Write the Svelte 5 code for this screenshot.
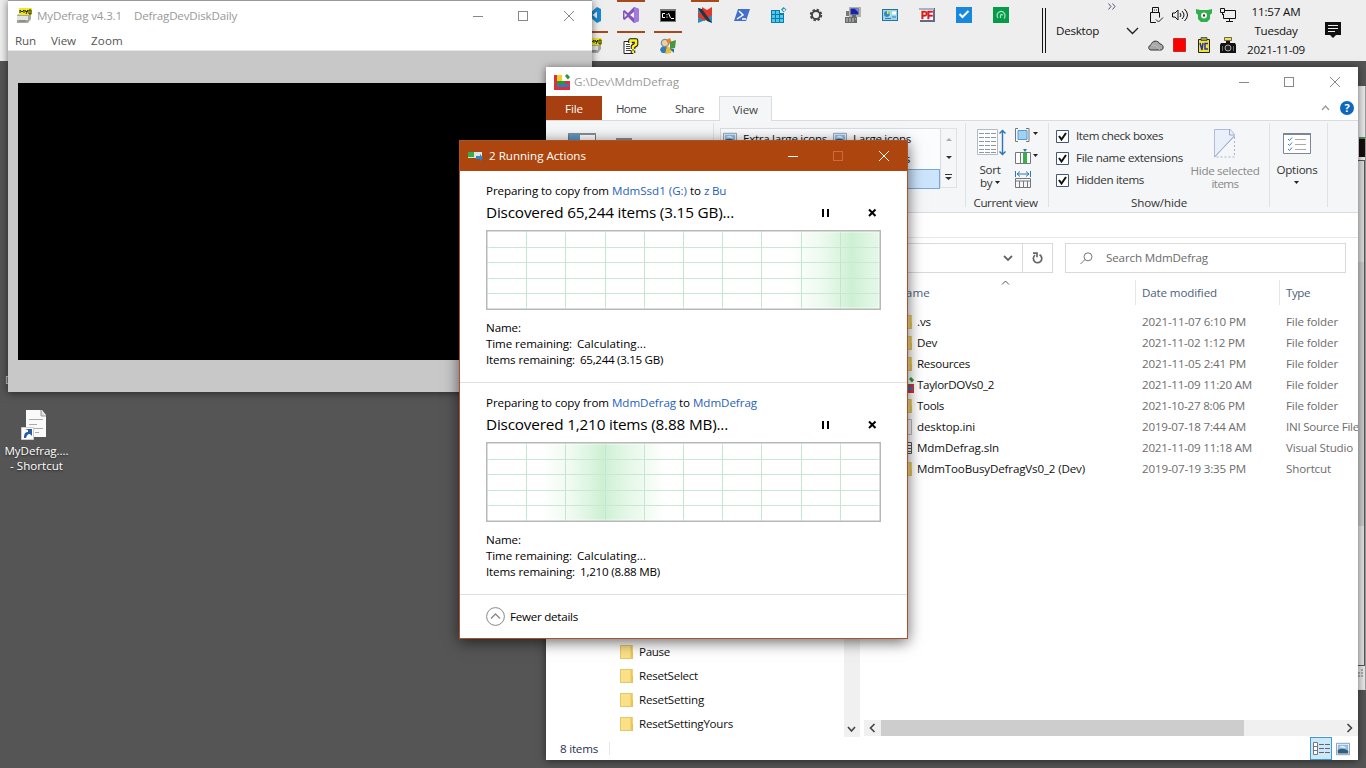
<script>
  // Spreads or tightens the letters of a label so that it fills the given width.
  function fit(node, width) {
    if (!width) return;
    const range = document.createRange();
    range.selectNodeContents(node);
    const natural = range.getBoundingClientRect().width;
    node.style.letterSpacing = `${(width - natural) / node.textContent.length}px`;
  }

  const launchers = ['code', 'vs', 'cmd', 'nt', 'ps', 'reg', 'gear', 'pc', 'panel', 'pf', 'check', 'cam'];
  const active = ['vs', 'nt'];
  const second = ['myd', 'help', 'users'];
  const tray = ['usb', 'sound', 'bear', 'net', 'cloud', 'red', 'vc', 'camera'];

  const jobs = [
    { from: 'MdmSsd1 (G:)', fw: 75, to: 'z Bu', tw: 22, title: 'Discovered 65,244 items (3.15 GB)...', w: 248, left: '65,244 (3.15 GB)', lw: 83, glow: 366, first: true },
    { from: 'MdmDefrag', fw: 64, to: 'MdmDefrag', tw: 64, title: 'Discovered 1,210 items (8.88 MB)...', w: 242, left: '1,210 (8.88 MB)', lw: 80, glow: 117 }
  ];
  const gridX = [40, 79, 119, 158, 197, 236, 275, 315, 354];
  const gridY = [17, 32, 48, 63];

  const files = [
    ['.vs', 14, '2021-11-07 6:10 PM', 104, 'File folder', 52, 'folder'],
    ['Dev', 20, '2021-11-02 1:12 PM', 103, 'File folder', 52, 'folder'],
    ['Resources', 53, '2021-11-05 2:41 PM', 104, 'File folder', 52, 'folder'],
    ['TaylorDOVs0_2', 77, '2021-11-09 11:20 AM', 110, 'File folder', 52, 'blocks'],
    ['Tools', 27, '2021-10-27 8:06 PM', 103, 'File folder', 52, 'folder'],
    ['desktop.ini', 58, '2019-07-18 7:44 AM', 104, 'INI Source File', 73, 'page'],
    ['MdmDefrag.sln', 82, '2021-11-09 11:18 AM', 110, 'Visual Studio', 67, 'sln'],
    ['MdmTooBusyDefragVs0_2 (Dev)', 168, '2019-07-19 3:35 PM', 104, 'Shortcut', 45, 'folder']
  ];
  const tree = [['Pause', 31], ['ResetSelect', 59], ['ResetSetting', 65], ['ResetSettingYours', 94]];
  const checks = [['Item check boxes', 87], ['File name extensions', 107], ['Hidden items', 68]];
</script>

{#snippet t(text, w, cls = '')}<span class="t {cls}" use:fit={w}>{text}</span>{/snippet}

{#snippet controls()}
  <svg class="ctl" width="102" height="12" viewBox="0 0 102 12" fill="none" stroke="currentColor">
    <path d="M0 5.500H10" /><rect class="mx" x="45.500" y=".5" width="9" height="9" /><path d="M91 0l10 10M101 0L91 10" />
  </svg>
{/snippet}

{#snippet icon(n)}
  <svg width="16" height="16" viewBox="0 0 16 16">
    {#if n === 'code'}
      <path d="M11 0l4 2v12l-4 2-7-6-3 2-1-1 3-3-3-3 1-1 3 2z" fill="#1689ce" /><path d="M11 4.500v7L6.500 8z" fill="#eee" />
    {:else if n === 'vs'}
      <path d="M11 0l5 2v12l-5 2-6-6-3.500 3L0 12V4l1.500-1L5 6z" fill="#8454ba" /><path d="M11.500 4.500v7L7 8zM1.500 5.500v5L4 8z" fill="#eee" /><path d="M11 0l5 2v12l-5 2z" fill="#a179df" />
    {:else if n === 'cmd'}
      <rect y="2" width="16" height="13" fill="#777" /><rect x="1" y="4" width="14" height="10" fill="#000" />
      <path d="M5 6.500H2.500v4H5M7 7v1.200M7 9.500v1.200M8.500 6l2 5M11 11.500h3" stroke="#fff" fill="none" />
    {:else if n === 'nt'}
      <path d="M1 1l5 2 4 5-4 5-5 2z" fill="#2a93c4" /><path d="M5 0l5 3 5-3v15l-4-2L5 6z" fill="#e2382c" /><path d="M1 10l5-4 5 5 4-3v8l-5-3-4 1-5 2z" fill="#278fbd" /><path d="M1 5l7 5v4l-7-4z" fill="#e2382c" /><path d="M1 1l4 1 8 11 2 3-5-2-7-9z" fill="#2b333e" />
    {:else if n === 'ps'}
      <path d="M4 2h12l-4 12H0z" fill="#406fcd" /><path d="M5 4l4 4-6 4M8 12h4" stroke="#fff" stroke-width="1.500" fill="none" />
    {:else if n === 'reg'}
      <path d="M0 3h9v3h4v10H0z" fill="#087eac" /><path d="M1 4h3v3H1zM5 4h3v3H5zM1 8h3v3H1zM5 8h3v3H5zM9 8h3v3H9zM1 12h3v3H1zM5 12h3v3H5zM9 12h3v3H9z" fill="#54c8ec" /><path d="M12.500 0l3 2.500-3 3-2.500-3z" fill="#3b91b6" /><path d="M12 2h2v2h-2z" fill="#c6eef8" />
    {:else if n === 'gear'}
      <circle cx="8" cy="8" r="5.300" fill="none" stroke="#444" stroke-width="1.800" stroke-dasharray="2.400 1.760" /><circle cx="8" cy="8" r="4" fill="none" stroke="#444" stroke-width="1.800" />
    {:else if n === 'pc'}
      <path d="M4 0h12v10H4z" fill="#b2b2a6" /><path d="M5.500 1.500h8v6h-8z" fill="#1724a5" /><path d="M9.500 1.500h4v4z" fill="#7985dd" /><path d="M1 4h3v5H1z" fill="#777b78" /><path d="M7 8h4v3H7zM0 10h12v6H0z" fill="#666a68" /><path d="M1 12h10M1 14h9" stroke="#ccc" stroke-dasharray="2 1" />
    {:else if n === 'panel'}
      <path d="M0 2h16v12H0z" fill="#2d6f9f" /><path d="M1 3h14v10H1z" fill="#9ad7ec" /><circle cx="5.500" cy="7" r="3" fill="#fff" /><path d="M5 4a3 3 0 103 3H5z" fill="#3588ba" /><path d="M5.500 4v3h3a3 3 0 00-3-3" fill="#a4c64b" /><path d="M10 4.500h4v3h-4z" fill="#fff" /><path d="M10 10h4M3 11.500h6" stroke="#387eaa" />
    {:else if n === 'pf'}
      <path d="M0 1h16v14H1V3H0z" fill="#646a80" /><path d="M1 3h13v10H1z" fill="#fff" /><path d="M0 1h15v2H0z" fill="#a4b2ca" /><text x="2" y="12.300" font-family="Liberation Sans" font-weight="900" font-size="10" stroke="#dc1515" stroke-width=".5" textLength="12" fill="#dc1515">PF</text>
    {:else if n === 'check'}
      <path d="M0 0h16v16H0z" fill="#1788dc" /><path d="M3.500 7l3 3 6-6" stroke="#fff" stroke-width="2" fill="none" />
    {:else if n === 'cam'}
      <path d="M0 0h16v16H0z" fill="#069b4b" /><path d="M5 11a4 4 0 117-2c0 1-.5 2-1 2.500M7.500 11V8.500c0-1.500 2-1.500 2 0" stroke="#a6dcbc" stroke-width="1.300" fill="none" />
    {:else if n === 'myd'}
      <path d="M1 7l4-2h10v6l-3 4H1z" fill="#a6a6a6" /><path d="M1 8h11v4H1z" fill="#e3e3df" /><path d="M3 0h13v7H3z" fill="#edea21" /><path d="M4 5V2l2 2 2-2v3M9 2l1 2 2-2-2 4M13 2v4h2V2z" stroke="#252510" fill="none" /><path d="M3 13h7" stroke="#797979" />
    {:else if n === 'help'}
      <path d="M1 3.500h9v12H1z" fill="#fff" stroke="#222" /><path d="M3 6.500h4M3 8.500h4M3 10.500h4M3 12.500h5" stroke="#444" /><path d="M7.500 5V2.500h5.500v4l-3 2V11M10 12.500v2.500" stroke="#111" stroke-width="4.600" fill="none" stroke-linejoin="round" /><path d="M7.500 5V2.500h5.500v4l-3 2V11M10 12.500v2.500" stroke="#fcf219" stroke-width="2.600" fill="none" stroke-linejoin="round" />
    {:else if n === 'users'}
      <path d="M0 12c1-5 6-5 8-2l-2 5H2z" fill="#317bb7" /><circle cx="5" cy="5" r="4.300" fill="#7b8f9c" /><circle cx="5" cy="5" r="3" fill="#f2cfa0" /><path d="M6 2l4-2 2 5-4 1z" fill="#e28332" /><path d="M7 8l5 3-1 4-6 1z" fill="#e8bd39" /><path d="M10 4l6-2-1 8-5 1z" fill="#4b9441" /><path d="M10 11h4v4z" fill="#256cac" />
    {:else if n === 'usb'}
      <path d="M4.500 5.500V.5h6v5M2.500 5.500h9v10h-9z" fill="none" stroke="#111" /><path d="M6 3h1M8 3h1" fill="none" stroke="#222" /><path d="M7 10.500h8.500V16H8z" fill="#eee" /><path d="M8 12.500l2.500 2.500 4.500-4.500" fill="none" stroke="#222" />
    {:else if n === 'sound'}
      <path d="M.5 6v4H3l3 3V3L3 6z" fill="none" stroke="#111" /><path d="M8 6q2 2 0 4M10 4q4 4 0 8M12.500 2q6 6 0 12" fill="none" stroke="#111" />
    {:else if n === 'bear'}
      <path d="M0 2l4 1h8l4-1v4l-2 2v4l-3 3H5l-3-3V8L0 6z" fill="#32ad4d" /><circle cx="8" cy="8.500" r="3" fill="#eee" /><path d="M7 7.500h2v2H7z" fill="#333" />
    {:else if n === 'net'}
      <path d="M5 3.500h10.500v8H3.500V7M9.500 12v3M6 14.500h7M.5 1.500h4v4h-4zM2.500 6v2" fill="none" stroke="#111" />
    {:else if n === 'cloud'}
      <path d="M3 13C0 13 0 8.500 3 8c1-5 7-5 9-1 4 0 4 6 1 6z" fill="#a8a8a8" stroke="#333" /><path d="M3 8q5-1 9 5" stroke="#bebebe" fill="none" />
    {:else if n === 'red'}
      <path d="M1.500 1.500h12v13h-12z" fill="#f00" stroke="#b31a12" stroke-width=".8" />
    {:else if n === 'vc'}
      <path d="M2.500 2.500h11v13h-11z" fill="#f1e534" stroke="#222" /><path d="M5 .5h6v3H5z" fill="#a0a04d" stroke="#222" stroke-width=".6" /><path d="M4 6l2 7 1-7M12 6.500H9V12h3" fill="none" stroke="#2935a1" stroke-width="1.500" />
    {:else if n === 'camera'}
      <path d="M4.500.5h7v3h-7z" fill="#eee34c" stroke="#333" stroke-width=".7" /><path d="M6 4h4v2h5l1 2v8H0V8l1-2h5z" fill="#111" /><circle cx="8" cy="11" r="3" fill="#222" stroke="#aaa" /><path d="M2.500 9v5M13.500 9v5" stroke="#666" />
    {:else if n === 'blocks'}
      <path d="M0 1h8v6h8v9H0z" fill="#d9313a" /><path d="M3 1h5v6H3z" fill="#f2cf22" /><path d="M3 7h8v3H3z" fill="#239b35" /><path d="M3 10h12v3H3z" fill="#3d72bd" /><path d="M11 2l2-2 3 3-2 2.500z" fill="#239b35" />
    {:else if n === 'folder'}
      <path d="M1 1h13v14H1z" fill="#f5d36e" /><path d="M2 2h9v12H2z" fill="#fbe08a" /><path d="M12 8h2v7h-2z" fill="#e9c251" /><path d="M1.500 1.500h11v13h-11z" fill="none" stroke="#e7c75f" />
    {:else if n === 'page'}
      <path d="M2.500.5h11v15h-11z" fill="#fafafa" stroke="#bbb" />
    {:else if n === 'sln'}
      <path d="M2.500 2.500h11v11h-11z" fill="#fff" stroke="#555" /><path d="M9 5.500h4M9 8.500h4M9 11.500h4" stroke="#555" />
    {:else if n === 'pic'}
      <path d="M.5 1.500h15v13H.5z" fill="#fff" stroke="#7d91aa" /><path d="M2 3h12v10H2z" fill="#8dbbe8" /><path d="M2 9q6-3 12 1v3H2z" fill="#355e79" /><path d="M3 6q5-4 9 1z" fill="#dceefa" />
    {/if}
  </svg>
{/snippet}

<main>
  <div class="back">
    <i class="blk"></i><i class="line"></i>
    <svg width="8" height="14"><path d="M5 4h3M2 7h6M2 10h6" stroke="#aaa" stroke-width="2" stroke-dasharray="2 1" /></svg>
  </div>

  <header class="taskbar">
    <div class="launch">
      <div class="row">
        {#each launchers as n}<div class="slot" class:on={active.includes(n)}>{@render icon(n)}</div>{/each}
      </div>
      <div class="row low">
        {#each second as n}<div class="slot on">{@render icon(n)}</div>{/each}
      </div>
    </div>
    <i class="bars"></i>
    <div class="deskbar">
      {@render t('Desktop', 43)}
      <svg class="more" width="8" height="7"><path d="M.5.500L3 3.500.5 6.500M4.500.500L7 3.500 4.500 6.500" fill="none" stroke="#555581" /></svg>
      <svg width="13" height="8"><path d="M1 1l5.500 5.500L12 1" fill="none" stroke="#222" stroke-width="1.400" /></svg>
    </div>
    <div class="tray">{#each tray as n}{@render icon(n)}{/each}</div>
    <div class="clock">{@render t('11:57 AM', 49)}{@render t('Tuesday', 43)}{@render t('2021-11-09', 58)}</div>
    <svg class="note" width="16" height="16"><path d="M0 0h16v13h-5l-3 3-3-3H0z" fill="#111" /><path d="M3 3.500h10M3 6.500h10M3 9.500h7" stroke="#eee" /></svg>
  </header>

  <div class="hiddenlabel">D</div>
  <div class="shortcut">
    <svg width="26" height="30" viewBox="0 0 26 30"><path d="M5 0h16l4 5v22H5z" fill="#fafafa" /><path d="M20 0v6h5" fill="#ddd" stroke="#999" /><path d="M8 9.500h14M8 14.500h8M13 18.500h9M14 22.500h4" stroke="#aaa" /><path d="M.5 17.500h12v12H.5z" fill="#fff" stroke="#ccc" /><path d="M3 28c0-4 1-6 4-6v-2l-3-1h7v7l-2-2c-3 0-3 2-4 4z" fill="#285c9f" /></svg>
    {@render t('MyDefrag....', 64)}{@render t('- Shortcut', 53)}
  </div>

  <section class="win mydefrag">
    <div class="mtitle">{@render icon('myd')}{@render t('MyDefrag v4.3.1', 85, 'a')}{@render t('DefragDevDiskDaily', 103)}{@render controls()}</div>
    <nav>{@render t('Run', 21)}{@render t('View', 25)}{@render t('Zoom', 32)}</nav>
    <div class="mbody"><div class="black"></div></div>
  </section>

  <section class="win explorer">
    <div class="etitle">{@render icon('blocks')}{@render t('G:\\Dev\\MdmDefrag', 105)}{@render controls()}</div>
    <div class="tabs">
      <div class="tab file">{@render t('File', 18)}</div>
      <div class="tab home">{@render t('Home', 30)}</div>
      <div class="tab share">{@render t('Share', 29)}</div>
      <div class="tab view">{@render t('View', 25)}</div>
      <svg class="fold" width="9" height="6"><path d="M1 5l3.500-4L8 5" fill="none" stroke="#999" stroke-width="1.300" /></svg>
      <div class="q">?</div>
    </div>
    <div class="ribbon">
      <div class="panes">
        <svg width="28" height="28"><path d="M.5.500h27v27H.5z" fill="#fff" stroke="#777" /><path d="M0 0h28v2H0z" fill="#858e99" /><path d="M1 2h11v25H1z" fill="#4f9bd1" /></svg>
        <svg class="p2" width="16" height="16"><path d="M0 0h16v16H0z" fill="#8b8e94" /></svg>
      </div>
      <div class="layout">
        <div class="gal">
          <div class="grow">{@render icon('pic')}{@render t('Extra large icons', 84)}{@render icon('pic')}{@render t('Large icons', 58)}</div>
          <div class="grow">{@render icon('pic')}{@render t('Medium icons', 84)}{@render icon('pic')}{@render t('Small icons', 57)}</div>
          <div class="sel"></div>
        </div>
        <div class="spin">
          <svg width="6" height="3"><path d="M3 0l3 3H0z" fill="#aaa" /></svg>
          <svg width="6" height="3"><path d="M0 0h6L3 3z" fill="#333" /></svg>
          <svg width="7" height="6"><path d="M0 0h7v1H0zM0 3h7L3.500 6z" fill="#333" /></svg>
        </div>
      </div>
      <div class="group current">
        <div class="gbody">
          <div class="sort">
            <svg width="29" height="28"><path d="M.5.500h20v25H.5z" fill="#fff" stroke="#b4bac1" /><path d="M2 4.500h17M2 8.500h17M2 12.500h17M2 16.500h17M2 20.500h17M2 23.500h17" stroke="#8a9aa5" stroke-dasharray="5 1" /><path d="M25.500 2v23M22.500 4.500l3-3 3 3M22.500 22.500l3 3 3-3" fill="none" stroke="#2d76b5" stroke-width="1.400" /></svg>
            {@render t('Sort', 21)}
            <div class="by">{@render t('by', 12)}<svg width="5" height="3"><path d="M0 0h5L2.500 3z" fill="#222" /></svg></div>
          </div>
          <div class="mini">
            <svg width="23" height="14"><path d="M3 .5H.5v13H3M11 .5h3v13h-3" fill="none" stroke="#777" /><path d="M3 2.500h9v9H3z" fill="#a0d2f5" stroke="#599ace" /><path d="M18 4h5l-2.500 3z" fill="#222" /></svg>
            <svg width="23" height="15"><path d="M.5 3.500h15v11H.5zM5.500 3v11M11.500 3v11" fill="#fff" stroke="#777" /><path d="M8 4h4v10H8z" fill="#35b34b" /><path d="M8 0h4l-2 3z" fill="#2d76b5" /><path d="M18 5h5l-2.500 3z" fill="#222" /></svg>
            <svg width="23" height="17"><path d="M.5 0v6M15.500 0v6M2 3h12M5 .500L2 3l3 2.500M11 .500L14 3l-3 2.500" fill="none" stroke="#2d76b5" /><path d="M.5 7.500h15v9H.5zM0 10h16M4.500 10v6M8.500 10v6M12.500 10v6" fill="none" stroke="#777" /></svg>
          </div>
        </div>
        {@render t('Current view', 64, 'cap')}
      </div>
      <div class="group show">
        <div class="gbody">
          <div class="checks">
            {#each checks as [c, w]}
              <div class="ck"><svg width="13" height="13"><path d="M.5.500h12v12H.5z" fill="#fff" stroke="#445874" /><path d="M3 6l2.500 3.500L10 3" fill="none" stroke="#111" stroke-width="2" /></svg>{@render t(c, w)}</div>
            {/each}
          </div>
          <div class="hide">
            <svg width="22" height="29"><path d="M.5.500h16l4 5v1L.5 28z" fill="#eaf0fb" stroke="#b1bdd8" /><path d="M15.500 0v6h5M.5 28L20.500 7" fill="none" stroke="#9baacb" /><path d="M20.500 8v20H0" fill="none" stroke="#aab5cd" stroke-dasharray="2 2" /></svg>
            {@render t('Hide selected', 69)}{@render t('items', 27)}
          </div>
        </div>
        {@render t('Show/hide', 56, 'cap')}
      </div>
      <div class="group opts">
        <svg width="28" height="22"><path d="M.5.500h27v20H.5z" fill="#fff" stroke="#7b8796" /><path d="M0 1h28" stroke="#7b8796" stroke-width="2" /><path d="M5 6l1.500 1.500L9 4.500M5 11l1.500 1.500L9 9.500M5 16l1.500 1.500L9 14.500" fill="none" stroke="#3a80c2" /><path d="M12 6.500h11M12 11.500h11M12 16.500h11" stroke="#aaa" /></svg>
        {@render t('Options', 41)}
        <svg class="dn" width="5" height="3"><path d="M0 0h5L2.500 3z" fill="#222" /></svg>
      </div>
    </div>
    <div class="qat"></div>
    <div class="addr">
      <div class="path"><svg width="10" height="7"><path d="M1 1l4 4 4-4" fill="none" stroke="#666" stroke-width="1.800" /></svg></div>
      <div class="re"><svg width="11" height="12"><path d="M7.500 2.800A4.200 4.200 0 113 3.200M1 1.200h4v4" fill="none" stroke="#666" stroke-width="1.700" /></svg></div>
      <div class="search"><svg width="13" height="13"><circle cx="8" cy="4.800" r="4" fill="none" stroke="#777" /><path d="M5 7.500L.5 12" stroke="#777" /></svg>{@render t('Search MdmDefrag', 102)}</div>
    </div>
    <div class="content">
      <div class="tree">
        {#each tree as [n, w]}<div class="node">{@render icon('folder')}{@render t(n, w)}</div>{/each}
      </div>
      <div class="vs"><svg width="9" height="6"><path d="M1 1l3.500 4L8 1" fill="none" stroke="#444" stroke-width="1.600" /></svg></div>
      <div class="list">
        <div class="head">
          <div class="c1">{@render t('Name', 33)}<svg class="up" width="9" height="5"><path d="M1 4.500L4.500 1 8 4.500" fill="none" stroke="#555" /></svg></div>
          <div class="c2">{@render t('Date modified', 75)}</div>
          <div class="c3">{@render t('Type', 24)}</div>
        </div>
        {#each files as [n, nw, d, dw, k, kw, ic]}
          <div class="frow">
            <div class="c1">{@render icon(ic)}{@render t(n, nw)}</div>
            <div class="c2">{@render t(d, dw)}</div>
            <div class="c3">{@render t(k, kw)}</div>
          </div>
        {/each}
        <div class="hs">
          <svg width="17" height="16"><path d="M10.500 4L6.500 8l4 4" fill="none" stroke="#444" stroke-width="1.600" /></svg>
          <i></i>
          <svg class="r" width="17" height="16"><path d="M6.500 4l4 4-4 4" fill="none" stroke="#444" stroke-width="1.600" /></svg>
        </div>
      </div>
    </div>
    <div class="status">
      {@render t('8 items', 38)}<i></i>
      <div class="vbtn"><svg width="17" height="13"><path d="M.5.500h4v12h-4zM.5 4.500h4M.5 8.500h4" fill="#fff" stroke="#777" /><path d="M6 2.500h5M12 2.500h5M6 6.500h5M12 6.500h5M6 10.500h5M12 10.500h5" stroke="#666" /></svg></div>
      <div class="pbtn">{@render icon('pic')}</div>
    </div>
  </section>

  <section class="dialog">
    <div class="dtitle">
      <svg width="15" height="10"><path d="M0 1h14v6H0z" fill="#dde5e4" /><path d="M0 1h6v5H0z" fill="#2fb04b" /><path d="M8 5h4V3l3 4-3 3V8H8z" fill="#2b86d1" /></svg>
      {@render t('2 Running Actions', 97)}{@render controls()}
    </div>
    {#each jobs as j}
      <div class="job">
        <div class="from">{@render t('Preparing to copy from', 123)}{@render t(j.from, j.fw, 'link')}{@render t('to', 11)}{@render t(j.to, j.tw, 'link')}</div>
        <div class="disc">
          {@render t(j.title, j.w, 'big')}
          <svg width="56" height="9"><path d="M1 1h2v8H1zM6 1h2v8H6z" fill="#000" /><path d="M48 1.500l6.500 6.500M54.500 1.500L48 8" stroke="#000" stroke-width="2" /></svg>
        </div>
        <svg class="chart" width="395" height="80">
          <defs>
            <linearGradient id="glow{j.glow}" x1="0" x2="1"><stop offset="0" stop-color="#d3f2d7" stop-opacity="0" /><stop offset=".22" stop-color="#d9f4dd" stop-opacity=".4" /><stop offset=".5" stop-color="#cdf0d2" /><stop offset=".75" stop-color="#daf4de" stop-opacity=".6" /><stop offset="1" stop-color="#d3f2d7" stop-opacity="0" /></linearGradient>
          </defs>
          <rect width="395" height="80" fill="#fff" />
          <rect x={j.glow - 61} width="122" height="80" fill="url(#glow{j.glow})" />
          {#each gridX as x}<rect {x} y="0" width="1" height="80" fill="#c4e5d1" />{/each}
          {#each gridY as y}<rect x="0" {y} width="395" height="1" fill="#c8e7d6" />{/each}
          <rect x="2" y="2" width="391" height="76" fill="none" stroke="#fff" stroke-opacity=".7" />
          <rect x=".75" y=".75" width="393.500" height="78.500" fill="none" stroke="#b7b9b8" stroke-width="1.500" />
        </svg>
        <div class="info">
          <div>{@render t('Name:', 35)}</div>
          <div>{@render t('Time remaining:', 86)}{@render t('Calculating...', 69, 'v1')}</div>
          <div>{@render t('Items remaining:', 89)}{@render t(j.left, j.lw, 'v2')}</div>
        </div>
      </div>
    {/each}
    <div class="fewer">
      <svg width="19" height="19"><circle cx="9.500" cy="9.500" r="8.900" fill="#fff" stroke="#888" /><path d="M5 11.500L9.500 7l4.500 4.500" fill="none" stroke="#888" stroke-width="1.300" /></svg>
      {@render t('Fewer details', 68)}
    </div>
  </section>
</main>

<style>
  :global(body) { margin: 0; overflow: hidden; }
  main { position: relative; width: 1366px; height: 768px; overflow: hidden; background: #555; font: 11.600px/16px "Open Sans", "Noto Sans", sans-serif; color: #111; }
  * { box-sizing: border-box; }
  svg { display: block; flex: none; }
  .t { display: inline-block; white-space: pre; flex: none; }

  .taskbar { position: relative; height: 61px; background: #eee; display: flex; padding-left: 577px; }
  .launch { width: 465px; padding-left: 1px; }
  .row { display: flex; height: 31px; margin-left: 2px; }
  .slot { width: 28px; margin-right: 9px; padding: 7px 6px 0; height: 31px; }
  .slot.on { border-top: 2px solid #a6491c; padding-top: 5px; }
  .bars { width: 4px; margin: 8px 0; border: solid #111; border-width: 0 1px; }
  .deskbar { position: relative; width: 94px; display: flex; align-items: center; gap: 27px; padding-left: 10px; }
  .more { position: absolute; left: 62px; top: 3px; }
  .deskbar svg:last-child { margin-left: 0; }
  .tray { width: 90px; display: grid; grid-template-columns: repeat(4, 16px); grid-auto-rows: 16px; gap: 14px 8px; padding: 7px 0 0 8px; }
  .clock { width: 92px; display: flex; flex-direction: column; align-items: center; line-height: 19px; padding-top: 2px; }
  .note { margin: 22px 0 0 3px; }

  .back { position: absolute; left: 1356px; top: 86px; width: 10px; height: 604px; background: #e8e8e8; border-right: 1px solid #999; border-bottom: 1px solid #ddd; }
  .back .blk { display: block; margin: 51px 0 0 3px; width: 6px; height: 20px; background: #170d0d; border-top: 2px solid #4a8557; }
  .back .line { display: block; height: 506px; border: solid #555; border-width: 1px 1px 1px 0; margin-top: 3px; background: linear-gradient(#ddd 101px, #ccc 101px, #ccc 365px, #e2e2e2 365px); }

  .hiddenlabel { position: absolute; left: 5px; top: 372px; color: #ddd; }
  .shortcut { position: absolute; left: 0; top: 410px; width: 73px; display: flex; flex-direction: column; align-items: center; color: #fff; line-height: 15px; text-shadow: 0 1px 2px #222; }
  .shortcut svg { margin: 0 5px 3px 0; }

  .win { position: absolute; display: flex; flex-direction: column; background: #fff; box-shadow: 0 1px 8px #0008; }
  .mydefrag { left: 8px; top: 0; width: 584px; height: 392px; border-top: 1px solid #999; color: #999; }
  .mtitle { height: 30px; display: flex; align-items: center; padding: 0 17px 0 8px; }
  .a { margin: 0 12px 0 5px; }
  .ctl { margin-left: auto; margin-bottom: -2px; }
  .mtitle .ctl, .etitle .ctl { stroke: #888; }
  nav { display: flex; gap: 15px; padding: 2px 0 0 7px; height: 20px; color: #555; line-height: 18px; }
  .mbody { flex: 1; background: #c8c8c8; border-top: 1px solid #e5e5e5; padding: 32px 10px; }
  .black { height: 277px; background: #000; }

  .explorer { left: 546px; top: 67px; width: 812px; height: 693px; }
  .etitle { height: 29px; display: flex; align-items: center; padding: 0 17px 0 8px; gap: 4px; color: #999; }
  .tabs { height: 25px; display: flex; border-bottom: 1px solid #dadbdc; padding-right: 4px; color: #444; }
  .tab { display: flex; align-items: center; justify-content: center; height: 25px; padding-top: 1px; }
  .file { width: 56px; height: 24px; background: #a73f10; color: #fff; padding-top: 2px; }
  .home { width: 58px; }
  .share { width: 59px; }
  .view { width: 53px; background: #f5f6f7; border: 1px solid #dadbdc; border-bottom: 0; }
  .fold { margin: 9px 10px 0 auto; }
  .q { width: 14px; height: 14px; margin-top: 5px; border-radius: 50%; background: #0c68bd; color: #fff; text-align: center; font-weight: 700; line-height: 14px; font-size: 11px; }
  .ribbon { height: 92px; display: flex; background: #f5f6f7; border-bottom: 1px solid #dadbdc; }
  .panes { width: 168px; border-right: 1px solid #e1e2e3; margin: 2px 0 5px; display: flex; padding: 10px 0 0 22px; gap: 20px; }
  .p2 { margin-top: 5px; }
  .layout { width: 252px; border-right: 1px solid #e1e2e3; margin: 2px 0 5px; padding: 5px 0 0 6px; display: flex; }
  .gal { width: 221px; height: 60px; border: 1px solid #d8dbe0; background: #fbfcfd; }
  .grow { height: 20px; display: flex; align-items: center; gap: 6px; padding-left: 2px; }
  .grow svg { width: 14px; }
  .sel { height: 20px; background: #cce4fc; border: 1px solid #7ca6d3; margin-left: 110px; }
  .spin { width: 16px; height: 60px; border: 1px solid #dfe1e4; border-left: 0; display: flex; flex-direction: column; align-items: center; justify-content: space-between; padding: 9px 0 7px; }
  .group { display: flex; flex-direction: column; align-items: center; border-right: 1px solid #e1e2e3; margin: 2px 0 5px; color: #333; }
  .gbody { height: 72px; display: flex; width: 100%; flex: none; }
  .current { width: 83px; }
  .current .cap { margin-right: 3px; }
  .sort { width: 48px; padding: 6px 0 0; display: flex; flex-direction: column; align-items: center; line-height: 13px; }
  .sort > svg { margin: 0 -2px 6px 0; }
  .by { display: flex; align-items: center; gap: 3px; }
  .mini { padding: 5px 0 0 1px; display: flex; flex-direction: column; gap: 7px; }
  .show { width: 221px; }
  .checks { width: 134px; padding: 2px 0 0 7px; }
  .ck { height: 22px; display: flex; align-items: center; gap: 7px; }
  .hide { width: 84px; padding-top: 6px; display: flex; flex-direction: column; align-items: center; line-height: 13px; color: #888; }
  .hide svg { margin-bottom: 6px; }
  .opts { width: 58px; padding: 10px 3px 0 0; }
  .opts > svg { margin-bottom: 7px; }
  .opts .dn { margin: 3px 2px 0 0; }
  .qat { height: 25px; border-bottom: 1px solid #e7e7e7; }
  .addr { height: 42px; display: flex; padding: 5px 12px 7px 0; }
  .path, .re, .search { border: 1px solid #d9d9d9; display: flex; align-items: center; height: 30px; }
  .path { width: 477px; justify-content: flex-end; padding-right: 9px; }
  .re { width: 30px; border-left: 0; justify-content: center; }
  .search { margin-left: 12px; width: 281px; padding-left: 14px; gap: 13px; color: #6b6b6b; }
  .content { height: 457px; display: flex; }
  .tree { width: 298px; display: flex; flex-direction: column; justify-content: flex-end; padding: 0 0 1px 73px; }
  .node { height: 24px; display: flex; align-items: center; gap: 4px; }
  .vs { width: 16px; background: #f0f0f0; display: flex; align-items: flex-end; justify-content: center; padding: 0 1px 5px 0; }
  .list { flex: 1; min-width: 0; padding-left: 4px; display: flex; flex-direction: column; overflow: hidden; }
  .head { height: 31px; display: flex; color: #4c607a; flex: none; }
  .head > div { height: 25px; padding-top: 5px; }
  .c1 { width: 272px; padding-left: 34px; position: relative; }
  .head .c1 { border-right: 1px solid #e5e5e5; padding-left: 33px; }
  .up { position: absolute; left: 137px; top: 0; }
  .c2 { width: 144px; padding-left: 6px; }
  .head .c2 { border-right: 1px solid #e5e5e5; }
  .c3 { width: 78px; padding-left: 6px; overflow: hidden; }
  .frow { display: flex; height: 21px; align-items: center; color: #6d6d6d; flex: none; }
  .frow .c1 { display: flex; align-items: center; gap: 3px; color: #111; }
  .hs { margin-top: auto; margin-bottom: 1px; display: flex; height: 16px; background: #f0f0f0; }
  .hs i { width: 363px; background: #cdcdcd; }
  .hs .r { margin-left: auto; }
  .status { flex: 1; display: flex; align-items: center; padding: 0 8px 0 14px; color: #1f3055; }
  .status > i { height: 13px; border-left: 1px solid #e5e5e5; margin-left: 11px; }
  .vbtn { margin-left: auto; width: 22px; height: 23px; background: #cce8fa; border: 1px solid #3d9bd3; display: flex; align-items: center; justify-content: center; }
  .pbtn { padding-left: 4px; }
  .pbtn svg { width: 14px; }

  .dialog { position: absolute; left: 459px; top: 140px; width: 449px; height: 499px; background: #fff; border: 1px solid #a8532e; box-shadow: 0 3px 14px #0009; color: #000; }
  .dtitle { height: 30px; background: #ad450e; color: #fff; display: flex; align-items: center; padding: 0 17px 0 8px; gap: 6px; }
  .dtitle .mx { stroke: #c96c3e; }
  .job { height: 212px; padding: 12px 26px 0; border-bottom: 1px solid #dfdfdf; }
  .from { display: flex; gap: 3px; height: 17px; }
  .link { color: #1f62bd; }
  .disc { display: flex; height: 30px; justify-content: space-between; line-height: 24px; padding-right: 4px; }
  .big { font-size: 15.300px; }
  .disc svg { margin-top: 8px; }
  .info { padding-top: 10px; }
  .info > div { display: flex; height: 16px; }
  .v1, .v2 { margin-left: 5px; }
  .fewer { height: 43px; display: flex; align-items: center; padding-left: 26px; gap: 5px; }
</style>
